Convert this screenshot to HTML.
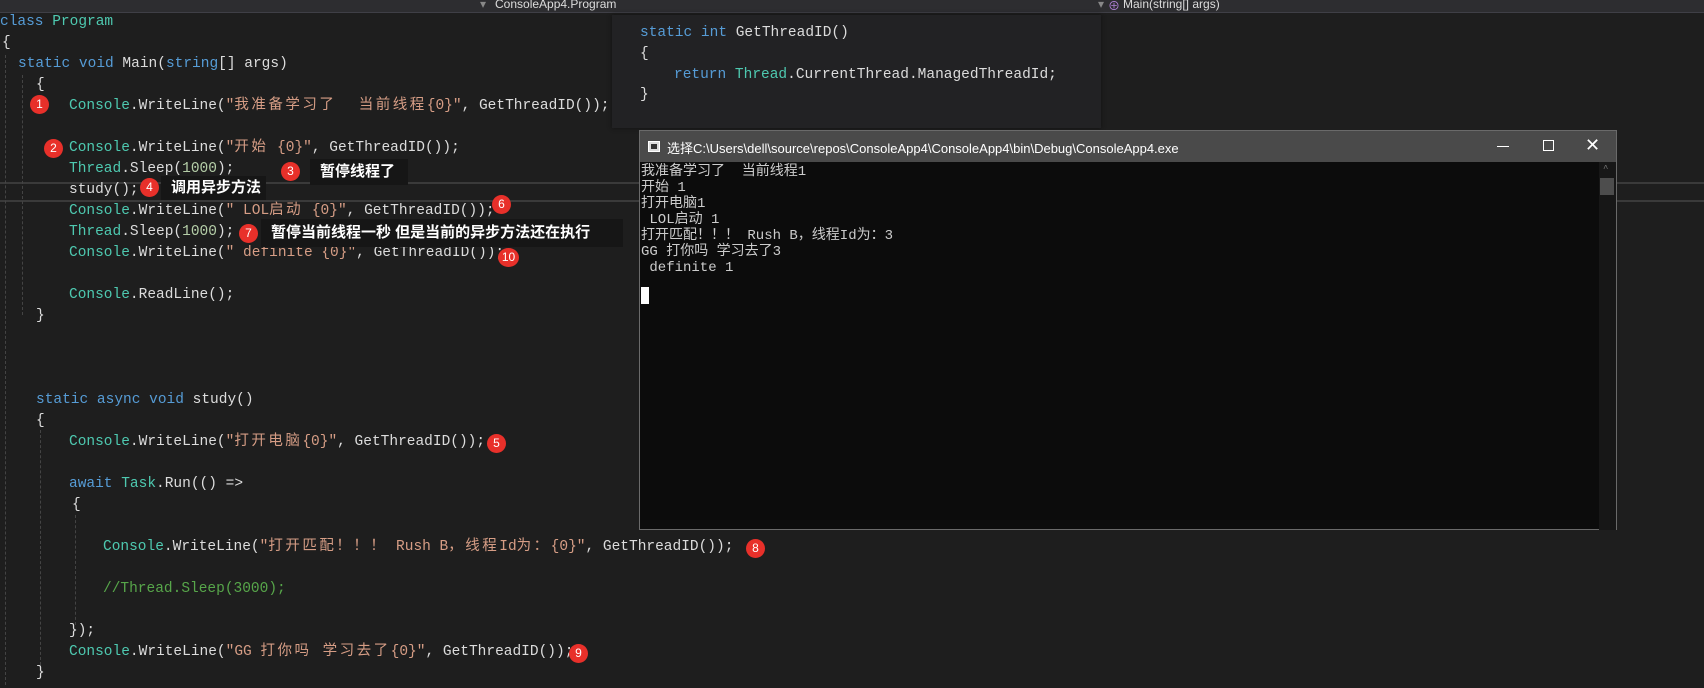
<!DOCTYPE html>
<html><head><meta charset="utf-8"><style>
*{margin:0;padding:0;box-sizing:border-box}
body{width:1704px;height:688px;background:#1e1e1e;overflow:hidden;position:relative;font-family:"Liberation Mono","Noto Sans CJK SC",monospace;font-size:14.5px;color:#dcdcdc}
.l{position:absolute;white-space:pre;line-height:21px;height:21px}
.k{color:#569cd6}.t{color:#4ec9b0}.s{color:#d69d85}.cm{color:#57a64a}.n{color:#b5cea8}
.c{letter-spacing:2.5px}
.hdr{position:absolute;left:0;top:0;width:1704px;height:13px;background:#2d2d30;border-bottom:1px solid #3f3f46;font-family:"Liberation Sans","Noto Sans CJK SC",sans-serif;font-size:12px;color:#dcdcdc}
.hdr span{position:absolute;top:-3px}
.sep{position:absolute;left:0;width:1704px;height:2px;background:#3a3a3a}
.dg{position:absolute;width:0;border-left:1px dashed #444}
.b{position:absolute;width:19px;height:19px;border-radius:50%;background:#e8302a;color:#fff;font-family:"Liberation Sans",sans-serif;font-size:12px;line-height:19px;text-align:center}
.lab{position:absolute;background:#161616;color:#fff;font-family:"Liberation Sans","Noto Sans CJK SC",sans-serif;font-size:15px;font-weight:bold;line-height:26px;padding-left:10px}
.pop{position:absolute;left:612px;top:15px;width:489px;height:113px;background:#222224;box-shadow:0 0 4px #111}
.con{position:absolute;left:639px;top:130px;width:978px;height:400px;background:#0c0c0c;border:1px solid #6a6a6a}
.tb{position:absolute;left:0;top:0;width:100%;height:31px;background:#4a4a4a;font-family:"Liberation Sans","Noto Sans CJK SC",sans-serif;font-size:13px;color:#fff}
.ct{position:absolute;left:1px;font-family:"Liberation Mono","Noto Sans CJK SC",monospace;font-size:14px;color:#ccc;white-space:pre;line-height:16px}
</style></head><body>
<div class="hdr"><span style="left:480px;color:#888">▾</span><span style="left:495px">ConsoleApp4.Program</span><span style="left:1098px;color:#888">▾</span><span style="left:1108px;color:#b180d7">⊕</span><span style="left:1123px">Main(string[] args)</span></div>
<div class="sep" style="top:182px"></div>
<div class="sep" style="top:200px"></div>
<div class="dg" style="left:5px;top:55px;height:630px"></div>
<div class="dg" style="left:22px;top:75px;height:240px"></div>
<div class="dg" style="left:40px;top:430px;height:235px"></div>
<div class="dg" style="left:75px;top:515px;height:110px"></div>

<div class="l" style="left:0;top:12px"><span class="k">class</span> <span class="t">Program</span></div>
<div class="l" style="left:2px;top:33px">{</div>
<div class="l" style="left:18px;top:54px"><span class="k">static void</span> Main(<span class="k">string</span>[] args)</div>
<div class="l" style="left:36px;top:75px">{</div>
<div class="l" style="left:69px;top:96px"><span class="t">Console</span>.WriteLine(<span class="s">"<span class="c">我准备学习了  当前线程</span>{0}"</span>, GetThreadID());</div>
<div class="l" style="left:69px;top:138px"><span class="t">Console</span>.WriteLine(<span class="s">"<span class="c">开始</span> {0}"</span>, GetThreadID());</div>
<div class="l" style="left:69px;top:159px"><span class="t">Thread</span>.Sleep(<span class="n">1000</span>);</div>
<div class="l" style="left:69px;top:180px">study();</div>
<div class="l" style="left:69px;top:201px"><span class="t">Console</span>.WriteLine(<span class="s">" LOL<span class="c">启动</span> {0}"</span>, GetThreadID());</div>
<div class="l" style="left:69px;top:222px"><span class="t">Thread</span>.Sleep(<span class="n">1000</span>);</div>
<div class="l" style="left:69px;top:243px"><span class="t">Console</span>.WriteLine(<span class="s">" definite {0}"</span>, GetThreadID());</div>
<div class="l" style="left:69px;top:285px"><span class="t">Console</span>.ReadLine();</div>
<div class="l" style="left:36px;top:306px">}</div>
<div class="l" style="left:36px;top:390px"><span class="k">static async void</span> study()</div>
<div class="l" style="left:36px;top:411px">{</div>
<div class="l" style="left:69px;top:432px"><span class="t">Console</span>.WriteLine(<span class="s">"<span class="c">打开电脑</span>{0}"</span>, GetThreadID());</div>
<div class="l" style="left:69px;top:474px"><span class="k">await</span> <span class="t">Task</span>.Run(() =&gt;</div>
<div class="l" style="left:72px;top:495px">{</div>
<div class="l" style="left:103px;top:537px"><span class="t">Console</span>.WriteLine(<span class="s">"<span class="c">打开匹配！！！</span> Rush B<span class="c">，线程</span>Id<span class="c">为：</span>{0}"</span>, GetThreadID());</div>
<div class="l" style="left:103px;top:579px"><span class="cm">//Thread.Sleep(3000);</span></div>
<div class="l" style="left:69px;top:621px">});</div>
<div class="l" style="left:69px;top:642px"><span class="t">Console</span>.WriteLine(<span class="s">"GG <span class="c">打你吗 学习去了</span>{0}"</span>, GetThreadID());</div>
<div class="l" style="left:36px;top:663px">}</div>

<div class="pop">
<div class="l" style="left:28px;top:8px"><span class="k">static int</span> GetThreadID()</div>
<div class="l" style="left:28px;top:29px">{</div>
<div class="l" style="left:62px;top:50px"><span class="k">return</span> <span class="t">Thread</span>.CurrentThread.ManagedThreadId;</div>
<div class="l" style="left:28px;top:70px">}</div>
</div>

<div class="lab" style="left:310px;top:159px;width:98px">暂停线程了</div>
<div class="lab" style="left:161px;top:176px;width:105px;line-height:24px">调用异步方法</div>
<div class="lab" style="left:261px;top:219px;width:362px;line-height:28px">暂停当前线程一秒 但是当前的异步方法还在执行</div>

<div class="b" style="left:30px;top:95px">1</div>
<div class="b" style="left:44px;top:139px">2</div>
<div class="b" style="left:281px;top:162px">3</div>
<div class="b" style="left:140px;top:178px">4</div>
<div class="b" style="left:492px;top:195px">6</div>
<div class="b" style="left:239px;top:224px">7</div>
<div class="b" style="left:498px;top:248px;width:21px">10</div>
<div class="b" style="left:487px;top:434px">5</div>
<div class="b" style="left:746px;top:539px">8</div>
<div class="b" style="left:569px;top:644px">9</div>

<div class="con">
<div class="tb">
<div style="position:absolute;left:8px;top:10px;width:12px;height:11px;background:#ddd;border:1px solid #fff"><div style="margin:2px;width:6px;height:5px;background:#333"></div></div>
<div style="position:absolute;left:27px;top:7px">选择C:\Users\dell\source\repos\ConsoleApp4\ConsoleApp4\bin\Debug\ConsoleApp4.exe</div>
<div style="position:absolute;left:857px;top:15px;width:12px;height:1px;background:#fff"></div>
<div style="position:absolute;left:903px;top:9px;width:11px;height:11px;border:1px solid #fff"></div>
<div style="position:absolute;left:945px;top:5px;font-size:18px;line-height:18px">✕</div>
</div>
<div style="position:absolute;right:0;top:31px;width:17px;height:368px;background:#171717"><div style="position:absolute;top:16px;left:1px;width:14px;height:17px;background:#4d4d4d"></div><div style="position:absolute;top:2px;left:4px;font-size:9px;color:#777">^</div></div>
<div class="ct" style="top:33px">我准备学习了  当前线程1
开始 1
打开电脑1
 LOL启动 1
打开匹配！！！ Rush B，线程Id为：3
GG 打你吗 学习去了3
 definite 1</div>
<div style="position:absolute;left:1px;top:156px;width:8px;height:17px;background:#fff"></div>
</div>
</body></html>
